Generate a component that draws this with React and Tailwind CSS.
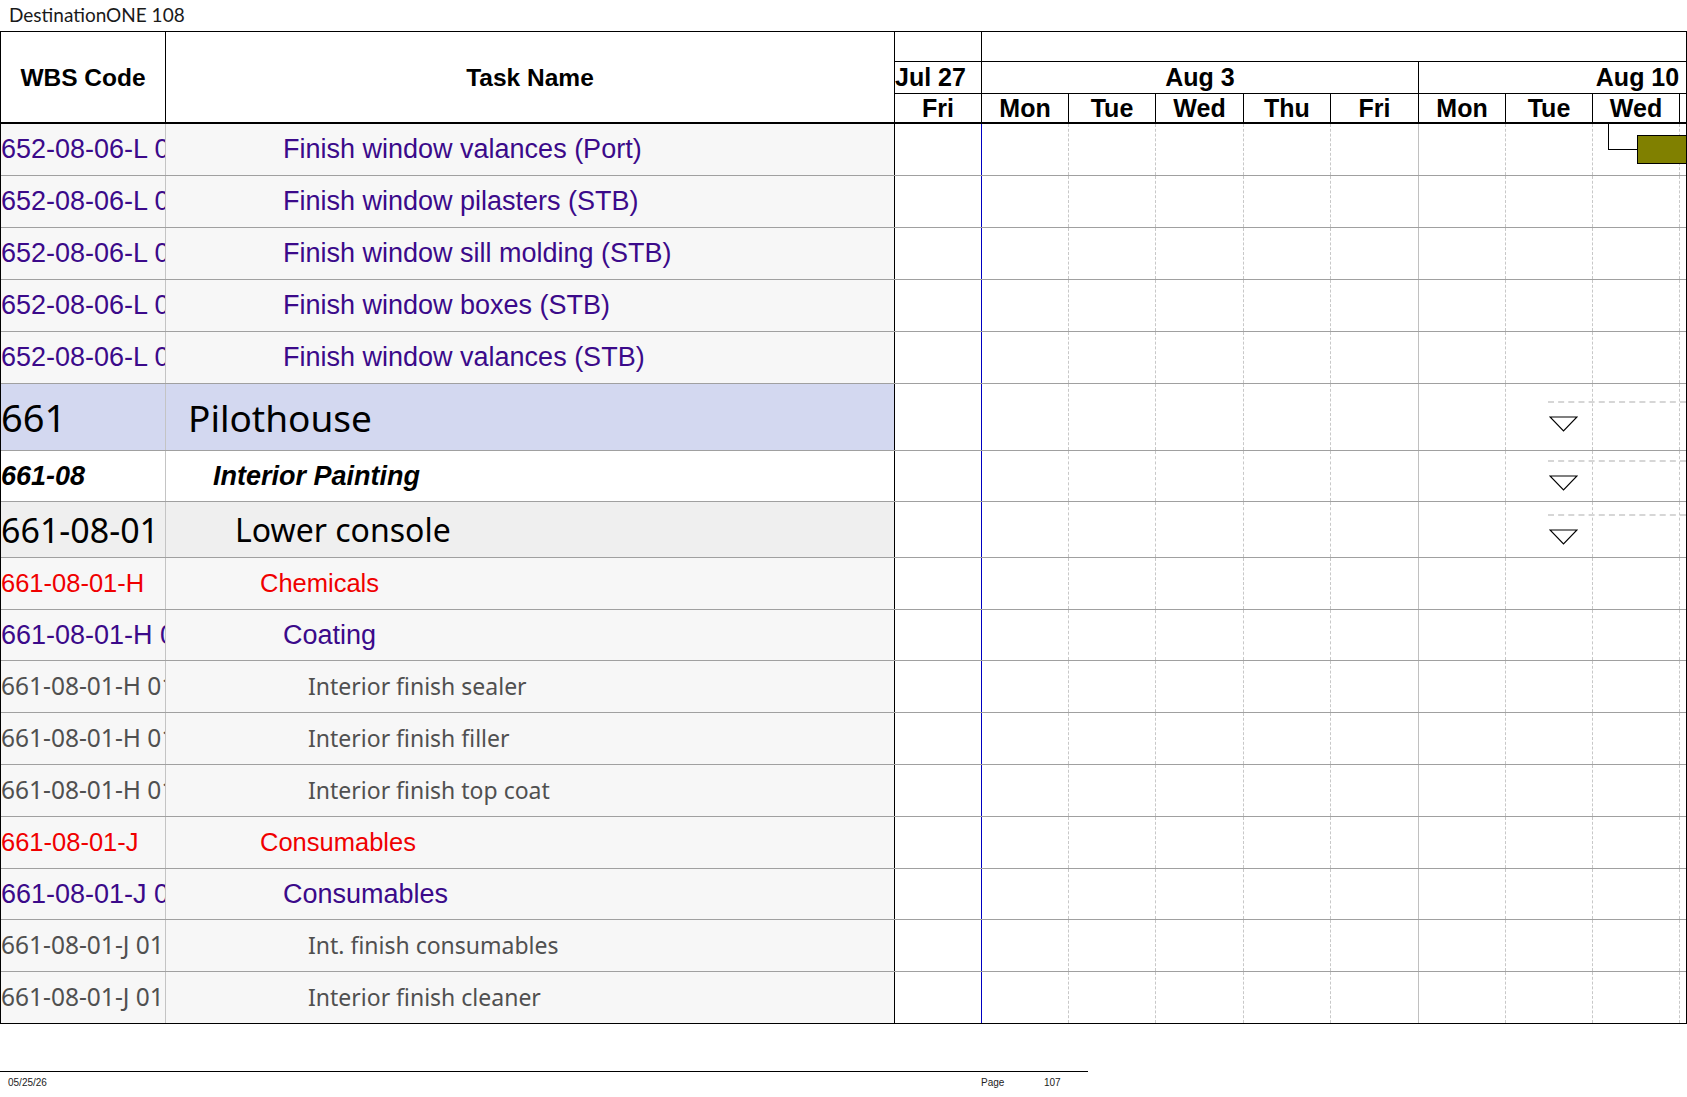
import clsx from 'clsx'

const DASHED = 'border-l border-dashed border-[#c8c8c8]'

// day columns of the gantt: widths and the line drawn on their left edge in the body
const COLS = [
  { w: 'w-[86px]', day: 'Fri', body: '' },
  { w: 'w-[87px]', day: 'Mon', body: 'border-l border-[#0000c0]' },
  { w: 'w-[87px]', day: 'Tue', body: DASHED },
  { w: 'w-[88px]', day: 'Wed', body: DASHED },
  { w: 'w-[87px]', day: 'Thu', body: DASHED },
  { w: 'w-[88px]', day: 'Fri', body: DASHED },
  { w: 'w-[87px]', day: 'Mon', body: 'border-l border-[#c0c0c0]' },
  { w: 'w-[87px]', day: 'Tue', body: DASHED },
  { w: 'w-[87px]', day: 'Wed', body: DASHED },
  { w: 'flex-1', day: '', body: DASHED },
]

const ARIAL = "font-['Liberation_Sans',Arial,sans-serif]"
const NOTO = "font-['Noto_Sans','Open_Sans',sans-serif]"

const KINDS = {
  purple: {
    bg: 'bg-[#f7f7f7]',
    wbs: clsx(ARIAL, 'text-[27px] text-[#3b0a8a]'),
    text: clsx(ARIAL, 'text-[27px] text-[#3b0a8a]'),
    indent: 'pl-[117px]',
  },
  red: {
    bg: 'bg-[#f7f7f7]',
    wbs: clsx(ARIAL, 'text-[25.5px] text-[#f00000]'),
    text: clsx(ARIAL, 'text-[25.5px] text-[#f00000]'),
    indent: 'pl-[94px]',
  },
  gray: {
    bg: 'bg-[#f7f7f7]',
    wbs: clsx(NOTO, 'text-[24.5px] text-[#505050]'),
    text: clsx(NOTO, 'text-[23px] text-[#505050]'),
    indent: 'pl-[142px]',
  },
  l1: {
    bg: 'bg-[#d3d8f0]',
    wbs: clsx(NOTO, 'text-[38px] text-black'),
    text: clsx(NOTO, 'text-[37px] text-black'),
    indent: 'pl-[22px]',
  },
  l2: {
    bg: 'bg-white',
    wbs: clsx(ARIAL, 'text-[27px] font-bold italic text-black'),
    text: clsx(ARIAL, 'text-[27px] font-bold italic text-black'),
    indent: 'pl-[47px]',
  },
  l3: {
    bg: 'bg-[#efefef]',
    wbs: clsx(NOTO, 'text-[34px] text-black'),
    text: clsx(NOTO, 'text-[32px] text-black'),
    indent: 'pl-[69px]',
  },
}

const ROWS = [
  { wbs: '652-08-06-L 01', name: 'Finish window valances (Port)', kind: 'purple', h: 'h-[52px]', bar: true },
  { wbs: '652-08-06-L 02', name: 'Finish window pilasters (STB)', kind: 'purple', h: 'h-[52px]' },
  { wbs: '652-08-06-L 03', name: 'Finish window sill molding (STB)', kind: 'purple', h: 'h-[52px]' },
  { wbs: '652-08-06-L 04', name: 'Finish window boxes (STB)', kind: 'purple', h: 'h-[52px]' },
  { wbs: '652-08-06-L 05', name: 'Finish window valances (STB)', kind: 'purple', h: 'h-[52px]' },
  { wbs: '661', name: 'Pilothouse', kind: 'l1', h: 'h-[67px]', summary: { line: 'top-[17px]', tri: 'top-[32px]' } },
  { wbs: '661-08', name: 'Interior Painting', kind: 'l2', h: 'h-[51px]', summary: { line: 'top-[9px]', tri: 'top-[24px]' } },
  { wbs: '661-08-01', name: 'Lower console', kind: 'l3', h: 'h-[56px]', summary: { line: 'top-[12px]', tri: 'top-[27px]' } },
  { wbs: '661-08-01-H', name: 'Chemicals', kind: 'red', h: 'h-[52px]' },
  { wbs: '661-08-01-H 01', name: 'Coating', kind: 'purple', h: 'h-[51px]' },
  { wbs: '661-08-01-H 01 01', name: 'Interior finish sealer', kind: 'gray', h: 'h-[52px]' },
  { wbs: '661-08-01-H 01 02', name: 'Interior finish filler', kind: 'gray', h: 'h-[52px]' },
  { wbs: '661-08-01-H 01 03', name: 'Interior finish top coat', kind: 'gray', h: 'h-[52px]' },
  { wbs: '661-08-01-J', name: 'Consumables', kind: 'red', h: 'h-[52px]' },
  { wbs: '661-08-01-J 01', name: 'Consumables', kind: 'purple', h: 'h-[51px]' },
  { wbs: '661-08-01-J 01 01', name: 'Int. finish consumables', kind: 'gray', h: 'h-[52px]' },
  { wbs: '661-08-01-J 01 02', name: 'Interior finish cleaner', kind: 'gray', h: 'h-[52px]' },
]

function SummaryMark({ line, tri }) {
  return (
    <>
      <div className={clsx('absolute left-[653px] right-0 border-t-2 border-dashed border-[#d6d6d6]', line)} />
      <svg className={clsx('absolute left-[654px]', tri)} width="29" height="16" viewBox="0 0 29 16">
        <path d="M1 1 H28 L14.5 15 Z" fill="white" stroke="black" strokeWidth="1.2" />
      </svg>
    </>
  )
}

function GanttCells({ row }) {
  return (
    <div className="relative flex flex-1 overflow-hidden bg-white">
      {COLS.map((c, i) => (
        <div key={i} className={clsx('h-full shrink-0', c.w, c.body)} />
      ))}
      {row.bar && (
        <>
          <div className="absolute left-[713px] top-0 h-[26px] w-[30px] border-l border-b border-black" />
          <div className="absolute left-[742px] top-[11px] h-[29px] w-[120px] border border-black bg-[#808000]" />
        </>
      )}
      {row.summary && <SummaryMark {...row.summary} />}
    </div>
  )
}

function Row({ row, last }) {
  const k = KINDS[row.kind]
  return (
    <div className={clsx('flex', row.h, last ? 'border-b border-black' : 'border-b border-[#a0a0a0]')}>
      <div className={clsx('flex w-[165px] shrink-0 items-center overflow-hidden whitespace-nowrap border-r border-[#c4c4c4] leading-none', k.bg, k.wbs)}>
        {row.wbs}
      </div>
      <div className={clsx('flex w-[729px] shrink-0 items-center overflow-hidden whitespace-nowrap border-r border-black leading-none', k.bg, k.text, k.indent)}>
        {row.name}
      </div>
      <GanttCells row={row} />
    </div>
  )
}

function Header() {
  return (
    <div className={clsx('flex h-[92px] border-b-2 border-black bg-white text-[24.5px] font-bold text-black', ARIAL)}>
      <div className="flex w-[165px] shrink-0 items-center justify-center pt-[2px] border-r border-black">WBS Code</div>
      <div className="flex w-[729px] shrink-0 items-center justify-center pt-[2px] border-r border-black">Task Name</div>
      <div className="flex flex-1 flex-col overflow-hidden text-[25px]">
        <div className="flex h-[30px] border-b border-black">
          <div className="w-[86px] shrink-0" />
          <div className="flex-1 border-l border-black" />
        </div>
        <div className="flex h-[32px] items-stretch border-b border-black leading-none">
          <div className="flex w-[86px] shrink-0 items-center overflow-hidden whitespace-nowrap">Jul 27</div>
          <div className="flex w-[437px] shrink-0 items-center justify-center border-l border-black">Aug 3</div>
          <div className="flex-1 overflow-hidden border-l border-black">
            <div className="flex h-full w-[437px] items-center justify-center whitespace-nowrap">Aug 10</div>
          </div>
        </div>
        <div className="flex h-[28px] leading-none">
          {COLS.map((c, i) => (
            <div key={i} className={clsx('flex shrink-0 items-center justify-center', c.w, i > 0 && 'border-l border-black')}>
              {c.day}
            </div>
          ))}
        </div>
      </div>
    </div>
  )
}

export default function App() {
  return (
    <div className="h-[1097px] w-[1687px] overflow-hidden bg-white">
      <div className="flex h-[31px] items-center pl-[9px] font-['Lato','Noto_Sans',sans-serif] text-[19px] text-[#1a1a1a]">
        DestinationONE 108
      </div>

      <div className="w-[1687px] border-x border-t border-black">
        <Header />
        {ROWS.map((r, i) => (
          <Row key={i} row={r} last={i === ROWS.length - 1} />
        ))}
      </div>

      {/* page footer */}
      <div className="mt-[47px] w-[1088px] border-t border-black">
        <div className="flex pt-[6px] font-['Liberation_Sans_Narrow','Liberation_Sans',Arial,sans-serif] text-[10px] leading-none text-[#222]">
          <span className="w-[981px] pl-[8px]">05/25/26</span>
          <span className="w-[63px]">Page</span>
          <span>107</span>
        </div>
      </div>
    </div>
  )
}
